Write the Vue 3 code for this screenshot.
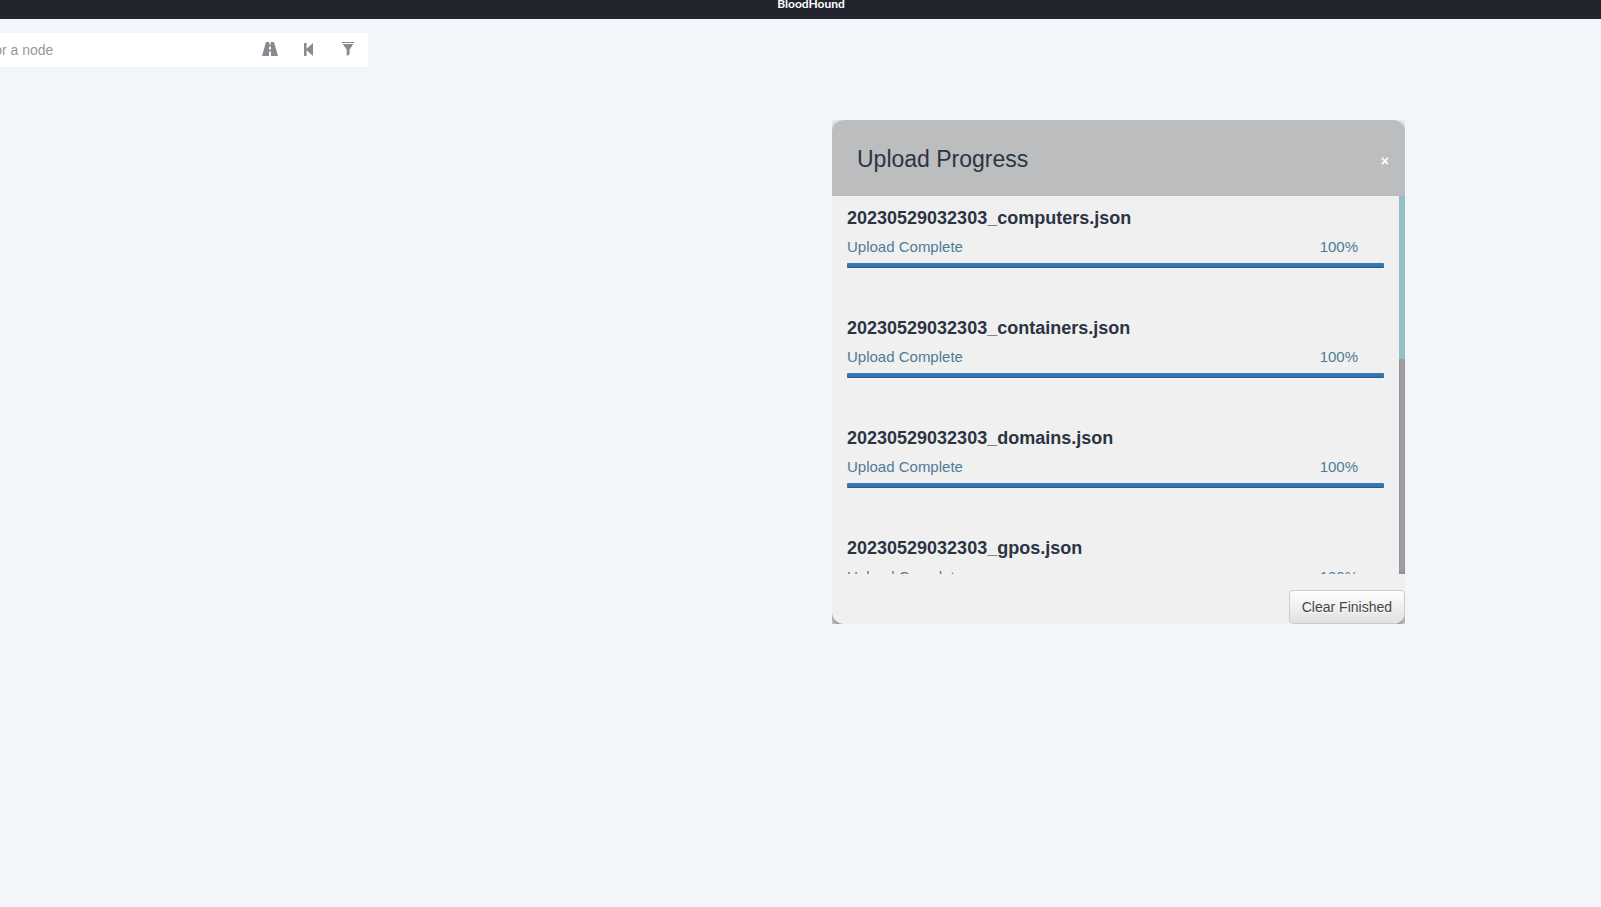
<template>
  <div class="app">
    <header class="titlebar">BloodHound</header>

    <main class="canvas">
      <form class="search" @submit.prevent>
        <input
          v-model="query"
          class="search-input"
          type="text"
          aria-label="Search for a node"
          placeholder="Search for a node"
        />
        <button class="search-button" type="button" aria-label="Pathfinding">
          <svg width="16" height="14" viewBox="0 0 16 14">
            <path d="M4 0h3.3v2.5h1.4V0H12l4 14H9v-4.5H7V14H0zM7.2 4.5L7 7.5h2l-.2-3z" />
          </svg>
        </button>
        <button class="search-button" type="button" aria-label="Back">
          <svg width="10" height="13" viewBox="0 0 10 13">
            <path d="M0 0h2.6v5.7L9 0v13L2.6 7.3V13H0z" />
          </svg>
        </button>
        <button class="search-button" type="button" aria-label="Filter">
          <svg width="13" height="14" viewBox="0 0 13 14">
            <path d="M0 0h12v1H0zM.6 2h10.8L7.6 7.6v4.6L4.7 14V7.6z" />
          </svg>
        </button>
      </form>

      <div v-if="isOpen" class="upload-frame">
        <section class="upload" aria-labelledby="upload-title">
          <div class="upload-header">
            <h3 id="upload-title" class="upload-title">Upload Progress</h3>
            <button class="close-button" type="button" aria-label="Close" @click="isOpen = false">×</button>
          </div>

          <div class="upload-body">
            <ul class="file-list">
              <li v-for="file in files" :key="file.name" class="file">
                <div class="file-name">{{ file.name }}</div>
                <div class="file-status">
                  <span>{{ file.status }}</span>
                  <span>{{ file.progress }}%</span>
                </div>
                <div class="progress">
                  <div class="progress-bar" :style="{ width: file.progress + '%' }"></div>
                </div>
              </li>
            </ul>
            <div class="scroll-track">
              <div class="scroll-thumb"></div>
            </div>
          </div>

          <div class="upload-footer">
            <button class="clear-button" type="button" @click="clearFinished">Clear Finished</button>
          </div>
        </section>
      </div>
    </main>
  </div>
</template>

<script setup>
import { ref } from 'vue';

const query = ref('');
const isOpen = ref(true);

const files = ref([
  { name: '20230529032303_computers.json', status: 'Upload Complete', progress: 100 },
  { name: '20230529032303_containers.json', status: 'Upload Complete', progress: 100 },
  { name: '20230529032303_domains.json', status: 'Upload Complete', progress: 100 },
  { name: '20230529032303_gpos.json', status: 'Upload Complete', progress: 100 },
]);

function clearFinished() {
  files.value = files.value.filter((file) => file.progress < 100);
}
</script>

<style>
body {
  background: #f2f6fb;
}
</style>

<style scoped>
.app {
  min-height: 100vh;
  overflow: hidden;
  background: #f2f6fb;
  font-family: "Liberation Sans", Arial, sans-serif;
}

.app *,
.app *::before {
  box-sizing: border-box;
}

.titlebar {
  height: 19px;
  padding-left: 21px;
  background: #22252e;
  color: #fff;
  font-family: Lato, sans-serif;
  font-size: 12px;
  font-weight: bold;
  line-height: 8px;
  text-align: center;
}

.canvas {
  display: flex;
  justify-content: space-between;
  align-items: flex-start;
  padding: 14px 196px 0 0;
}

.search {
  display: flex;
  width: 438px;
  height: 34px;
  margin-left: -70px;
  background: #fff;
}

.search-input {
  flex: 1;
  min-width: 0;
  padding: 0 12px;
  border: 0;
  outline: 0;
  background: transparent;
  color: #555;
  font-family: inherit;
  font-size: 14px;
}

.search-input::placeholder {
  color: #999;
  opacity: 1;
}

.search-button {
  display: flex;
  align-items: center;
  justify-content: center;
  width: 39px;
  padding: 0 1px 2px 0;
  border: 0;
  background: transparent;
  cursor: pointer;
}

.search-button svg {
  fill: #868a92;
}

/* Clips the shadow so that it only shows behind the rounded corners */
.upload-frame {
  flex: 0 1 573px;
  margin-top: 87px;
  overflow: hidden;
}

.upload {
  overflow: hidden;
  border-radius: 12px;
  background: #f0f0f0;
  box-shadow: 0 5px 12px rgba(0, 0, 0, 0.6);
}

.upload-header {
  display: flex;
  align-items: center;
  justify-content: space-between;
  height: 76px;
  padding: 2px 15px 0 25px;
  background: #bcbdbf;
}

.upload-title {
  margin: 0;
  color: #2b3443;
  font-size: 23px;
  font-weight: normal;
  line-height: 28px;
}

.close-button {
  padding: 4px 1px 0;
  border: 0;
  background: transparent;
  color: #fff;
  font-family: inherit;
  font-size: 14px;
  font-weight: bold;
  line-height: 16px;
  cursor: pointer;
}

.upload-body {
  display: flex;
  height: 378px;
}

.file-list {
  flex: 1;
  margin: 0;
  padding: 0 15px;
  overflow-y: auto;
  scrollbar-width: none;
  list-style: none;
}

.file {
  height: 110px;
  padding-top: 10px;
}

.file-name {
  color: #2b3443;
  font-size: 18px;
  font-weight: bold;
  line-height: 24px;
}

.file-status {
  display: flex;
  justify-content: space-between;
  margin-top: 7px;
  padding-right: 26px;
  color: #4f7b98;
  font-size: 15px;
  line-height: 20px;
}

.progress {
  height: 5px;
  margin-top: 6px;
  overflow: hidden;
  border-radius: 1px;
  background: #ddd;
}

.progress-bar {
  height: 100%;
  background: linear-gradient(#3a7db9, #2f6da4);
  box-shadow: inset 0 -1px 0 rgba(0, 0, 0, 0.15);
}

.scroll-track {
  width: 6px;
  background: #a8aaae;
  box-shadow: inset 0 0 4px rgba(0, 0, 0, 0.3);
}

.scroll-thumb {
  height: 43%;
  background: #93bfc5;
}

.upload-footer {
  display: flex;
  justify-content: flex-end;
  padding-top: 16px;
}

.clear-button {
  height: 34px;
  padding: 0 12px;
  border: 1px solid #ccc;
  border-radius: 4px;
  background: linear-gradient(#fff, #e0e0e0);
  color: #444;
  font-family: inherit;
  font-size: 14px;
  text-shadow: 0 1px 0 #fff;
  cursor: pointer;
}
</style>
